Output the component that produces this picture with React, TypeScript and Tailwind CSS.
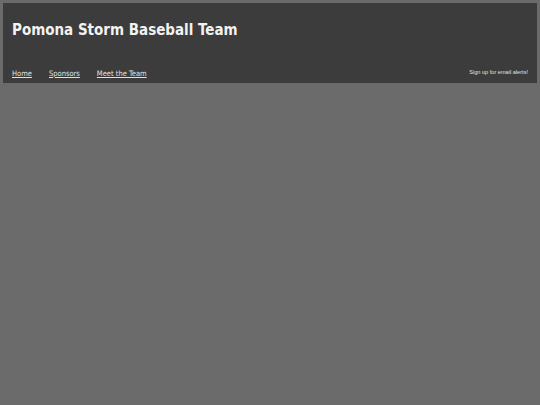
import React from "react";

export default function App() {
  return (
    <div className="min-h-[405px] w-full bg-[#6b6b6b] p-[3px]" style={{ fontFamily: '"DejaVu Sans Condensed", "DejaVu Sans", Verdana, sans-serif' }}>
      <div className="h-[80px] bg-[#3c3c3c] flex flex-col justify-between px-[9px]">
        <h1 className="pt-[17px] text-[15px] font-bold text-[#f2f2f2] leading-[20px]">Pomona Storm Baseball Team</h1>
        <div className="flex items-end justify-between pb-[3px]">
          <nav className="flex gap-[17px] text-[7.5px] leading-[12px] text-[#e0e0e0]">
            <a className="underline" href="#">Home</a>
            <a className="underline" href="#">Sponsors</a>
            <a className="underline" href="#">Meet the Team</a>
          </nav>
          <span className="text-[5.6px] leading-[12px] text-[#e0e0e0] pb-[2px]" style={{ fontFamily: '"Liberation Sans", Arial, sans-serif' }}>Sign up for email alerts!</span>
        </div>
      </div>
    </div>
  );
}
